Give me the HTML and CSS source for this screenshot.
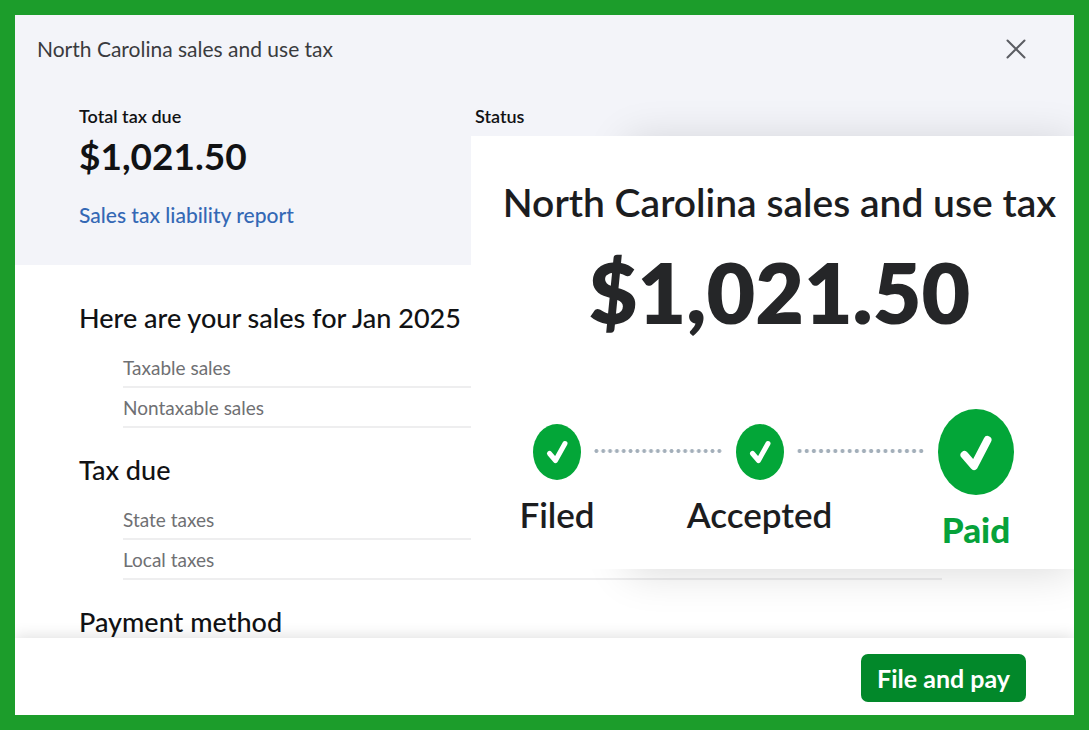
FILE: index.html
```html
<!DOCTYPE html>
<html lang="en">
<head>
<meta charset="utf-8">
<title>North Carolina sales and use tax</title>
<link rel="stylesheet" href="styles.css">
</head>
<body>
<div class="panel">
  <header class="summary">
    <div class="topbar">
      <h1 class="page-title">North Carolina sales and use tax</h1>
      <button class="close" type="button" aria-label="Close">
        <svg width="20" height="20" viewBox="0 0 20 20" fill="none" stroke="#5b5d63" stroke-width="2" stroke-linecap="round" aria-hidden="true"><path d="M1.5 1.5 18.5 18.5M18.5 1.5 1.5 18.5"/></svg>
      </button>
    </div>
    <div class="facts">
      <div class="fact">
        <div class="fact-label">Total tax due</div>
        <div class="amount">$1,021.50</div>
        <a class="report-link" href="#report">Sales tax liability report</a>
      </div>
      <div class="fact">
        <div class="fact-label">Status</div>
      </div>
    </div>
  </header>

  <main class="details">
    <section class="group">
      <h2 class="group-title">Here are your sales for Jan 2025</h2>
      <ul class="rows">
        <li class="row">Taxable sales</li>
        <li class="row">Nontaxable sales</li>
      </ul>
    </section>
    <section class="group">
      <h2 class="group-title">Tax due</h2>
      <ul class="rows">
        <li class="row">State taxes</li>
        <li class="row">Local taxes</li>
      </ul>
    </section>
    <section class="group">
      <h2 class="group-title">Payment method</h2>
    </section>
  </main>

  <footer class="actions">
    <button class="primary" type="button">File and pay</button>
  </footer>

  <aside class="popup">
    <div class="card">
      <h2 class="card-title">North Carolina sales and use tax</h2>
      <div class="card-amount">$1,021.50</div>
      <div class="steps">
        <div class="step">
          <svg class="badge" viewBox="0 0 48 56" aria-hidden="true"><ellipse cx="24" cy="28" rx="24" ry="28" fill="#03a638"/><path d="M16.500 29.500 22.500 36.500 32 19.500" fill="none" stroke="#fff" stroke-width="5" stroke-linecap="round" stroke-linejoin="round"/></svg>
          <span class="step-label">Filed</span>
        </div>
        <div class="dots"></div>
        <div class="step">
          <svg class="badge" viewBox="0 0 48 56" aria-hidden="true"><ellipse cx="24" cy="28" rx="24" ry="28" fill="#03a638"/><path d="M16.500 29.500 22.500 36.500 32 19.500" fill="none" stroke="#fff" stroke-width="5" stroke-linecap="round" stroke-linejoin="round"/></svg>
          <span class="step-label">Accepted</span>
        </div>
        <div class="dots"></div>
        <div class="step step-current">
          <svg class="badge" viewBox="0 0 76 86" aria-hidden="true"><ellipse cx="38" cy="43" rx="38" ry="43" fill="#03a638"/><path d="M26.500 46 36 57 49.500 31" fill="none" stroke="#fff" stroke-width="8" stroke-linecap="round" stroke-linejoin="round"/></svg>
          <span class="step-label">Paid</span>
        </div>
      </div>
    </div>
  </aside>
</div>
</body>
</html>
```

FILE: styles.css
```css
* {
  box-sizing: border-box;
}

body {
  margin: 0;
  padding: 15px;
  height: 100vh;
  background: #1c9d2b;
  color: #111214;
  font-family: Lato, "Liberation Sans", sans-serif;
}

h1,
h2,
ul {
  margin: 0;
  padding: 0;
}

button {
  border: 0;
  font-family: inherit;
}

.panel {
  position: relative;
  display: flex;
  flex-direction: column;
  height: 100%;
  overflow: hidden;
  background: #fff;
}

.summary {
  flex: none;
  padding: 20px 48px 38px 22px;
  background: #f3f4f9;
}

.topbar {
  display: flex;
  align-items: center;
  justify-content: space-between;
}

.page-title {
  color: #3a3b3e;
  font-size: 21px;
  font-weight: 400;
  line-height: 28px;
}

.close {
  display: flex;
  padding: 0;
  background: none;
}

.facts {
  display: grid;
  grid-template-columns: 396px 1fr;
  padding: 41px 0 0 42px;
}

.fact-label {
  font-size: 18px;
  font-weight: 600;
  line-height: 24px;
}

.amount {
  font-size: 37px;
  font-weight: 700;
  line-height: 56px;
}

.report-link {
  display: block;
  margin-top: 19px;
  color: #3468b5;
  font-size: 21px;
  font-weight: 500;
  line-height: 24px;
  text-decoration: none;
}

.details {
  flex: 1;
  min-height: 0;
  padding: 37px 132px 0 64px;
  overflow: hidden;
}

.group {
  margin-bottom: 26px;
}

.group-title {
  font-size: 27px;
  font-weight: 500;
  line-height: 32px;
}

.rows {
  padding: 14px 0 0 44px;
  list-style: none;
}

.row {
  height: 40px;
  border-bottom: 2px solid #eeeeef;
  color: #6f7073;
  font-size: 19px;
  line-height: 40px;
}

.actions {
  display: flex;
  flex: none;
  justify-content: flex-end;
  padding: 16px 48px 13px;
  background: #fff;
  box-shadow: 0 -2px 14px rgba(0, 0, 0, 0.12);
}

.primary {
  height: 48px;
  padding: 0 16px;
  border-radius: 7px;
  background: #02882a;
  color: #fff;
  font-size: 25px;
  font-weight: 700;
}

.popup {
  position: absolute;
  top: 121px;
  right: 0;
  left: 456px;
}

.popup::before {
  content: "";
  position: absolute;
  inset: 0 0 0 156px;
  box-shadow: 0 4px 40px rgba(0, 0, 0, 0.14);
}

.card {
  position: relative;
  padding: 41px 0 18px;
  background: #fff;
  color: #1c1d1f;
}

.card-title {
  padding-left: 14px;
  font-size: 39px;
  font-weight: 600;
  line-height: 50px;
  text-align: center;
  white-space: nowrap;
}

.card-amount {
  padding-left: 14px;
  color: #252628;
  font-size: 84px;
  font-weight: 800;
  line-height: 130px;
  text-align: center;
}

.steps {
  display: grid;
  grid-template-columns: 48px 1fr 48px 1fr 76px;
  padding: 52px 60px 0 62px;
}

.step {
  display: flex;
  flex-direction: column;
  align-items: center;
  gap: 12px;
  padding-top: 15px;
}

.step-current {
  padding-top: 0;
  color: #06a23a;
}

.badge {
  flex: none;
  width: 100%;
}

.step-label {
  font-size: 35px;
  font-weight: 600;
  line-height: 44px;
}

.step-current .step-label {
  font-weight: 900;
}

.dots {
  height: 4px;
  margin: 40px 13px 0 12px;
  background: radial-gradient(circle, #a3afba 40%, transparent 60%) 0 0 / 7px 4px round;
}
```
